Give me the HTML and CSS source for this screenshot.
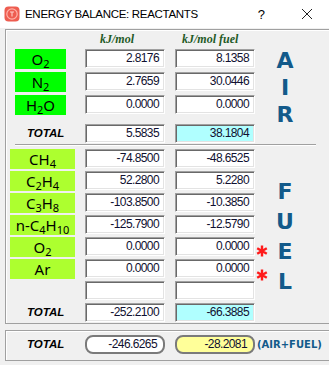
FILE: index.html
```html
<!DOCTYPE html>
<html>
<head>
    <title>Energy Balance: Reactants</title>
    <link rel="stylesheet" href="styles.css">
</head>
<body>
    <div class="titlebar">
        <svg class="appicon" width="16" height="16" viewBox="0 0 16 16">
            <rect x="0.5" y="0.5" width="15" height="15" rx="4" fill="#ee5d50"/>
            <circle cx="8" cy="8" r="5.2" fill="none" stroke="#ffb4aa" stroke-width="1.2"/>
            <path d="M6 6h4M8 6v4.5" stroke="#ffd0c8" stroke-width="1.1" fill="none"/>
        </svg>
        <span class="title">ENERGY BALANCE: REACTANTS</span>
        <span class="help">?</span>
        <svg class="close" width="12" height="12" viewBox="0 0 12 12">
            <path d="M1 1L11 11M11 1L1 11" stroke="#222" stroke-width="1" fill="none"/>
        </svg>
    </div>

    <div class="panel">
        <div class="grid head">
            <span></span>
            <span class="unit u1">kJ/mol</span>
            <span class="unit u2">kJ/mol fuel</span>
        </div>

        <!-- air side -->
        <div class="grid air">
            <div class="letters air-letters"><span>A</span><span>I</span><span>R</span></div>
            <div class="tag air-tag">O<sub>2</sub></div>
            <div class="field">2.8176</div>
            <div class="field">8.1358</div>
            <div class="tag air-tag">N<sub>2</sub></div>
            <div class="field">2.7659</div>
            <div class="field">30.0446</div>
            <div class="tag air-tag">H<sub>2</sub>O</div>
            <div class="field">0.0000</div>
            <div class="field">0.0000</div>
            <div class="total-label">TOTAL</div>
            <div class="field low">5.5835</div>
            <div class="field low sum">38.1804</div>
        </div>

        <div class="sep"></div>

        <!-- fuel side -->
        <div class="grid fuel">
            <div class="letters fuel-letters"><span>F</span><span>U</span><span>E</span><span>L</span></div>
            <div class="tag fuel-tag">CH<sub>4</sub></div>
            <div class="field">-74.8500</div>
            <div class="field">-48.6525</div>
            <div class="tag fuel-tag">C<sub>2</sub>H<sub>4</sub></div>
            <div class="field">52.2800</div>
            <div class="field">5.2280</div>
            <div class="tag fuel-tag">C<sub>3</sub>H<sub>8</sub></div>
            <div class="field">-103.8500</div>
            <div class="field">-10.3850</div>
            <div class="tag fuel-tag">n-C<sub>4</sub>H<sub>10</sub></div>
            <div class="field">-125.7900</div>
            <div class="field">-12.5790</div>
            <div class="tag fuel-tag">O<sub>2</sub></div>
            <div class="field">0.0000</div>
            <div class="field">0.0000</div>
            <svg class="mark" width="12" height="12" viewBox="0 0 12 12">
                <path d="M6 0.5V11.5M1.2 3.2L10.8 8.8M1.2 8.8L10.8 3.2" stroke="#ff1a1a" stroke-width="2.4" fill="none"/>
            </svg>
            <div class="tag fuel-tag">Ar</div>
            <div class="field">0.0000</div>
            <div class="field">0.0000</div>
            <svg class="mark mark-low" width="12" height="12" viewBox="0 0 12 12">
                <path d="M6 0.5V11.5M1.2 3.2L10.8 8.8M1.2 8.8L10.8 3.2" stroke="#ff1a1a" stroke-width="2.4" fill="none"/>
            </svg>
            <div class="blank"></div>
            <div class="field"></div>
            <div class="field"></div>
            <div class="total-label">TOTAL</div>
            <div class="field">-252.2100</div>
            <div class="field sum">-66.3885</div>
        </div>
    </div>

    <div class="panel summary">
        <div class="grid">
            <div class="total-label">TOTAL</div>
            <div class="field round">-246.6265</div>
            <div class="field round yellow">-28.2081</div>
            <div class="both">(AIR+FUEL)</div>
        </div>
    </div>
</body>
</html>
```

FILE: styles.css
```css
body {
    margin: 0;
    background-color: #f0f0f0;
    font-family: "Liberation Sans", Arial, sans-serif;
    color: #000;
}
.titlebar {
    height: 28px;
    background-color: #fff;
    display: flex;
    align-items: center;
}
.appicon {
    margin-left: 4px;
    margin-right: 5px;
}
.title {
    font-size: 11.5px;
    letter-spacing: -0.3px;
    flex: 1;
}
.help {
    font-size: 13px;
    margin-right: 36px;
}
.close {
    margin-right: 16px;
}
.panel {
    margin: 1px 0 0 5px;
    width: 319px;
    border: 1px solid #a0a0a0;
    box-shadow: inset 1px 1px 0 #fff;
    padding: 3px 0 0 4px;
    box-sizing: content-box;
}
.panel > .grid, .panel .grid {
    display: grid;
    grid-template-columns: 65px 90px 90px 14px 32px;
}
.head {
    height: 13px;
    margin-bottom: 3px;
}
.unit {
    font-family: "Liberation Serif", "Times New Roman", serif;
    font-weight: bold;
    font-style: italic;
    font-size: 12px;
    line-height: 13px;
    color: #1f5a26;
}
.u1 {
    padding-left: 25px;
}
.u2 {
    padding-left: 17px;
}
.air {
    grid-template-rows: repeat(3, 20px) 25px;
    row-gap: 3px;
}
.fuel {
    grid-template-rows: repeat(8, 20px);
    row-gap: 2px;
    margin-top: 3px;
}
.tag {
    grid-column: 1;
    height: 20px;
    font-family: "Noto Sans", sans-serif;
    font-size: 15px;
    line-height: 20px;
    text-align: center;
    color: #000;
}
.tag sub {
    font-size: 11px;
    line-height: 0;
    vertical-align: -3px;
}
.air-tag {
    background-color: #00ff00;
    width: 51px;
    margin-left: 5px;
}
.fuel-tag {
    background-color: #adff2f;
}
.blank {
    grid-column: 1;
}
.field {
    justify-self: end;
    align-self: start;
    width: 80px;
    height: 19px;
    box-sizing: border-box;
    background-color: #fff;
    border: 1px solid #a0a0a0;
    border-right-color: #fff;
    border-bottom-color: #fff;
    box-shadow: inset 1px 1px 0 #696969, inset -1px -1px 0 #e3e3e3;
    font-size: 12px;
    letter-spacing: -0.6px;
    line-height: 17px;
    text-align: right;
    padding-right: 5px;
    color: #101030;
}
.low {
    align-self: end;
}
.sum {
    background-color: #b0ffff;
}
.total-label {
    grid-column: 1;
    font-weight: bold;
    font-style: italic;
    font-size: 11.5px;
    line-height: 19px;
    padding-left: 17px;
    color: #000;
}
.air .total-label {
    align-self: end;
}
.mark {
    grid-column: 4;
    margin: 8px 0 0 1px;
}
.mark-low {
    margin-top: 10px;
}
.letters {
    grid-column: 5;
    display: flex;
    flex-direction: column;
    align-items: center;
    font-family: "DejaVu Sans", sans-serif;
    font-weight: bold;
    font-size: 22px;
    color: #135a8a;
}
.air-letters {
    grid-row: 1 / span 4;
    line-height: 27px;
    margin-top: -2px;
}
.fuel-letters {
    grid-row: 1 / span 8;
    line-height: 30px;
    padding-top: 28px;
}
.sep {
    margin: 1px 0 0 5px;
    width: 301px;
    height: 1px;
    background-color: #a0a0a0;
    border-bottom: 1px solid #fff;
}
.summary {
    margin-top: 6px;
    padding: 4px 0 6px 4px;
}
.summary .total-label {
    line-height: 19px;
}
.round {
    border: 2px solid #7a7a7a;
    border-radius: 8px;
    box-shadow: none;
    line-height: 15px;
    padding-right: 6px;
}
.yellow {
    background-color: #ffff99;
}
.both {
    grid-column: 4 / span 2;
    padding-left: 2px;
    font-family: "DejaVu Sans", sans-serif;
    font-weight: bold;
    font-size: 10px;
    line-height: 19px;
    color: #135a8a;
    white-space: nowrap;
}
```
